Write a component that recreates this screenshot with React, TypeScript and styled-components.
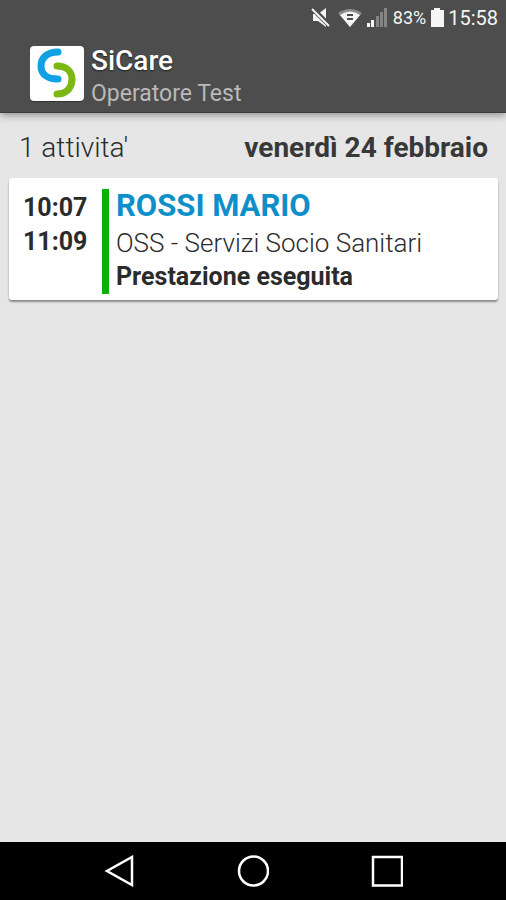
import React from "react";
import styled, { createGlobalStyle } from "styled-components";

const GlobalStyle = createGlobalStyle`
  * { box-sizing: border-box; }
  body {
    margin: 0;
    background: #e6e6e6;
    color: #2b2b2b;
    font-family: Roboto, "Noto Sans", sans-serif;
  }
`;

const Screen = styled.div`
  display: flex;
  flex-direction: column;
  min-height: 100vh;
`;

const TopArea = styled.div`
  background: #4d4d4d;
  border-bottom: 1px solid #3c3c3c;
  box-shadow: 0 2px 8px rgba(0, 0, 0, 0.4);
`;

const StatusBar = styled.div`
  display: flex;
  align-items: center;
  justify-content: flex-end;
  gap: 4px;
  height: 36px;
  padding-right: 8px;
  color: #f5f5f5;
  svg { display: block; flex: none; }
`;

const StatusText = styled.span<{ $size: number }>`
  font-size: ${(p) => p.$size}px;
  line-height: 24px;
`;

const Header = styled.header`
  display: flex;
  gap: 7px;
  padding: 9px 28px 1px 30px;
`;

const Logo = styled.svg`
  display: block;
  flex: none;
  margin-top: 1px;
`;

const AppTitle = styled.h1`
  margin: 0;
  font-size: 28px;
  font-weight: 500;
  line-height: 32px;
  color: #fff;
  text-shadow: 0 1px 2px rgba(0, 0, 0, 0.6);
`;

const AppSubtitle = styled.p`
  margin: 0;
  font-size: 23px;
  line-height: 34px;
  color: #b9b9b9;
`;

const Main = styled.main`
  flex: 1;
`;

const DayRow = styled.div`
  display: flex;
  justify-content: space-between;
  padding: 19px 18px 14px 19px;
  font-size: 28px;
  line-height: 32px;
`;

const Count = styled.span`
  font-weight: 300;
`;

const Day = styled.time`
  font-weight: 700;
  color: #383838;
`;

const Card = styled.article`
  display: flex;
  margin: 0 8px 0 9px;
  padding: 11px 14px 6px;
  border-radius: 3px;
  background: #fff;
  box-shadow: 0 2px 2px rgba(0, 0, 0, 0.4);
`;

const Times = styled.div`
  display: flex;
  flex-direction: column;
  width: 79px;
  padding-top: 2px;
  font-size: 25px;
  font-weight: 700;
  line-height: 34px;
`;

const Details = styled.div`
  padding-left: 7px;
  border-left: 7px solid #09b109;
`;

const Name = styled.h2`
  margin: 0 0 3px;
  font-size: 31px;
  font-weight: 700;
  line-height: 34px;
  color: #0f8fca;
`;

const Line = styled.p<{ $strong?: boolean }>`
  margin: 0;
  font-size: ${(p) => (p.$strong ? 25 : 26)}px;
  font-weight: ${(p) => (p.$strong ? 700 : 300)};
  line-height: 34px;
`;

const NavBar = styled.nav`
  display: grid;
  grid-template-columns: repeat(3, 1fr);
  padding: 0 52px;
  height: 58px;
  background: #000;
`;

const NavButton = styled.button`
  display: flex;
  align-items: center;
  justify-content: center;
  padding: 0;
  border: 0;
  background: none;
  color: #fff;
  cursor: pointer;
`;

const NavIcon = ({ children }: { children: React.ReactNode }) => (
  <svg width="32" height="32" viewBox="0 0 32 32" fill="none" stroke="currentColor" strokeWidth="2.5" aria-hidden="true">
    {children}
  </svg>
);

export default function App() {
  return (
    <>
      <GlobalStyle />
      <Screen>
        <TopArea>
          <StatusBar>
            <svg width="24" height="22" viewBox="0 0 24 22" fill="#f5f5f5" aria-label="Audio disattivato">
              <path d="M3 7h5l8-6v19l-8-6H3z" />
              <path d="M2 1l18 18" stroke="#4d4d4d" strokeWidth="5" />
              <path d="M2 2l17 17" stroke="#f5f5f5" strokeWidth="2" />
            </svg>
            <svg width="24" height="20" viewBox="0 0 24 20" aria-label="Wi-Fi">
              <path d="M0 5Q12-3 24 5L12 19z" fill="#8b8b8b" />
              <path d="M2 7Q12 0 22 7L12 19z" fill="#f5f5f5" />
              <path d="M9 6h6v2H9zM9 10h6v2H9z" fill="#4d4d4d" />
            </svg>
            <svg width="23" height="20" viewBox="0 0 23 20" aria-label="Segnale">
              <path d="M1 15h3v4H1zM5 12h3v7H5z" fill="#f5f5f5" />
              <path d="M10 8h3v11h-3zM14 4h3v15h-3zM18 0h3v19h-3z" fill="#858585" />
            </svg>
            <StatusText $size={18}>83%</StatusText>
            <svg width="14" height="20" viewBox="0 0 14 20" fill="#f5f5f5" aria-label="Batteria">
              <path d="M1 2h3V0h6v2h4v17H1z" />
            </svg>
            <StatusText $size={20}>15:58</StatusText>
          </StatusBar>
          <Header>
            <Logo width="54" height="56" viewBox="0 0 54 56" aria-label="Logo SiCare">
              <rect width="54" height="56" rx="4" fill="#333" />
              <rect width="54" height="55" rx="4" fill="#fff" />
              <g fill="none" strokeWidth="7" strokeLinecap="round">
                <path d="M28 6C17 6 11 12 11 20C11 28 17 33 28 33" stroke="#12a0e4" />
                <path d="M27 20C37 20 42 26 42 33.5C42 41 37 48 27 48" stroke="#7db713" />
              </g>
            </Logo>
            <div>
              <AppTitle>SiCare</AppTitle>
              <AppSubtitle>Operatore Test</AppSubtitle>
            </div>
          </Header>
        </TopArea>
        <Main>
          <DayRow>
            <Count>1 attivita'</Count>
            <Day>venerdì 24 febbraio</Day>
          </DayRow>
          <Card>
            <Times>
              <time>10:07</time>
              <time>11:09</time>
            </Times>
            <Details>
              <Name>ROSSI MARIO</Name>
              <Line>OSS - Servizi Socio Sanitari</Line>
              <Line $strong>Prestazione eseguita</Line>
            </Details>
          </Card>
        </Main>
        <NavBar>
          <NavButton aria-label="Indietro">
            <NavIcon><path d="M29 2v28L4 16z" /></NavIcon>
          </NavButton>
          <NavButton aria-label="Home">
            <NavIcon><circle cx="16.5" cy="16" r="14.5" /></NavIcon>
          </NavButton>
          <NavButton aria-label="Recenti">
            <NavIcon><rect x="2" y="2" width="29" height="28.5" /></NavIcon>
          </NavButton>
        </NavBar>
      </Screen>
    </>
  );
}
